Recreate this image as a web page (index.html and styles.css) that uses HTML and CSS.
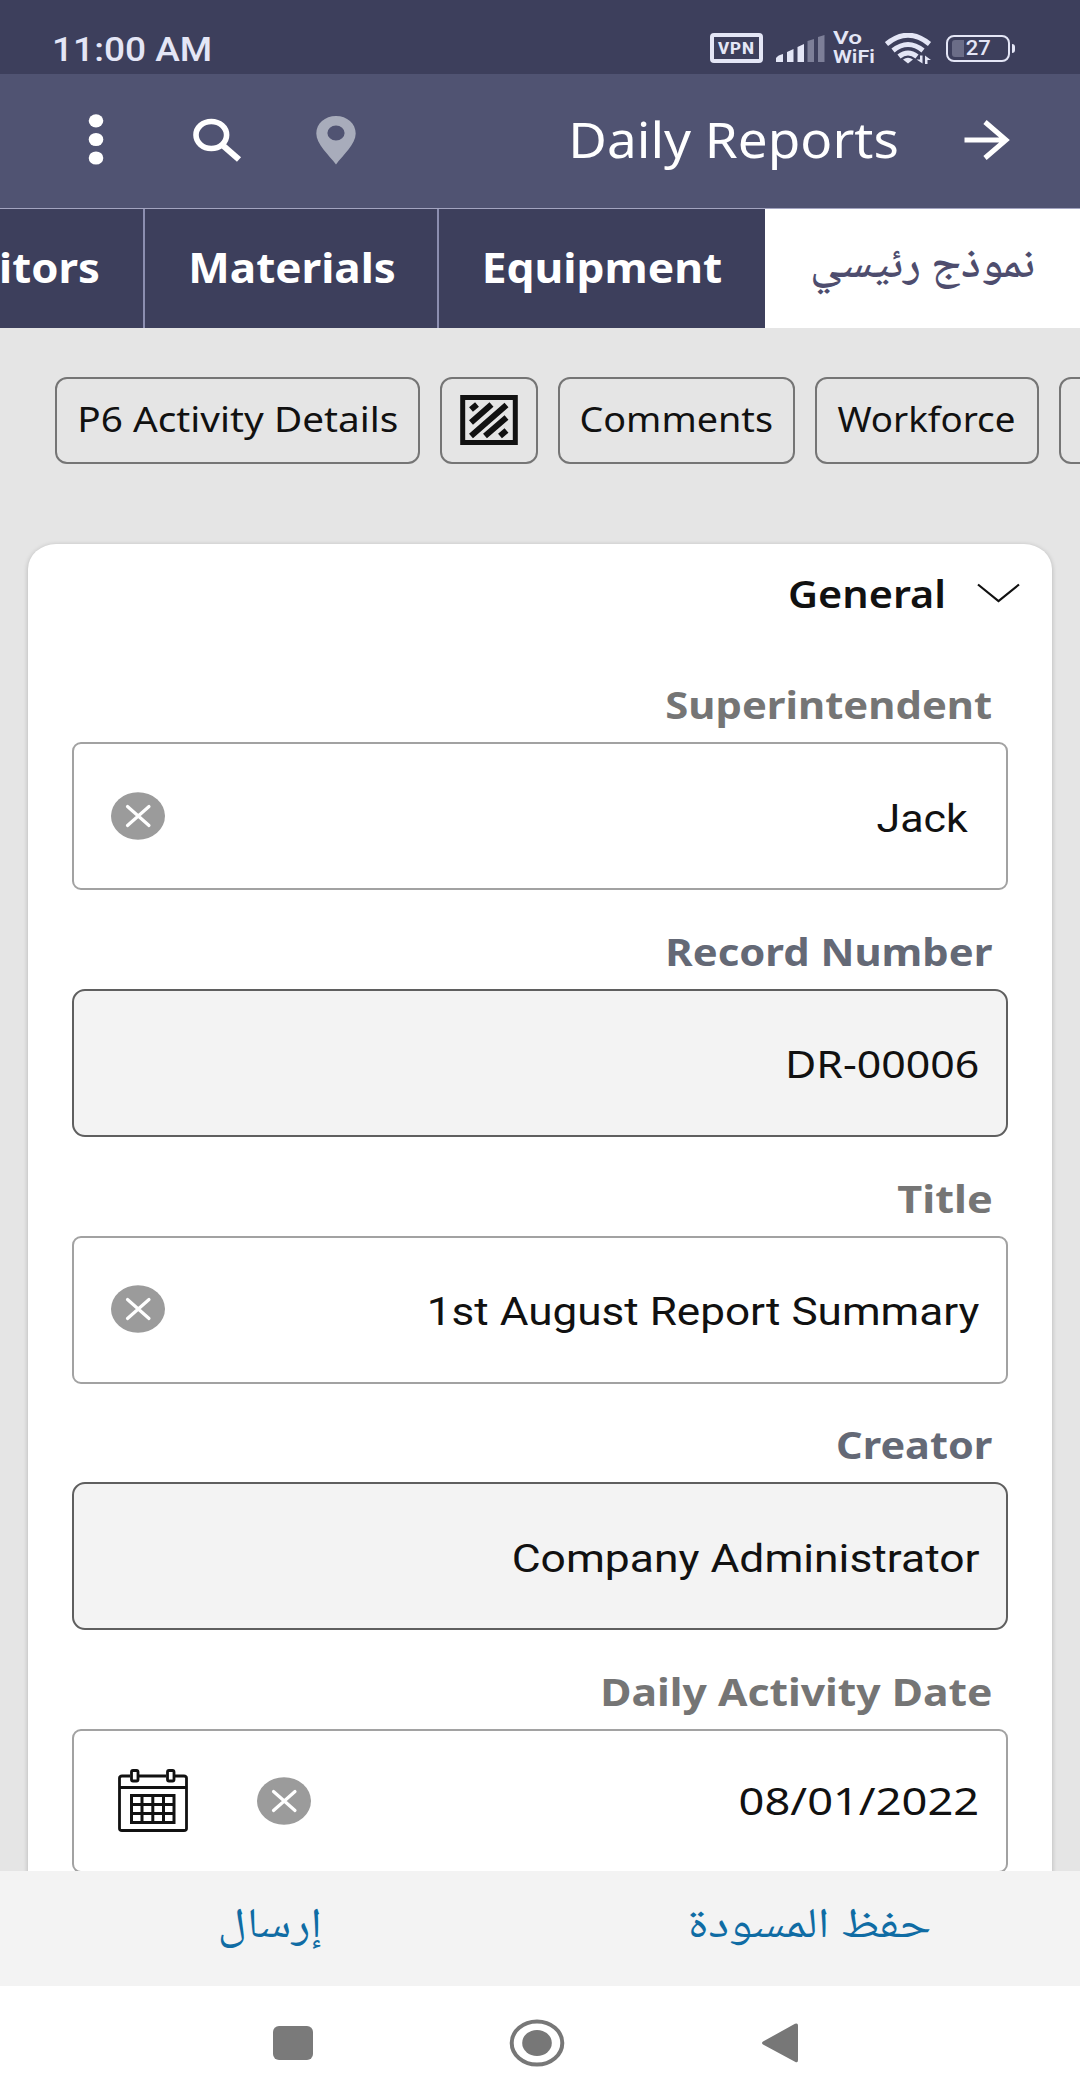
FILE: index.html
```html
<!DOCTYPE html>
<html lang="ar">
<head>
<meta charset="utf-8">
<title>Daily Reports</title>
<link rel="stylesheet" href="styles.css">
</head>
<body>
<div class="status-bar">
  <span class="clock fit">11:00 AM</span>
  <div class="status-icons">
    <span class="vpn">VPN</span>
    <svg class="signal" width="49" height="28" viewBox="0 0 49 28">
      <path d="M0 27V23Q2 20 7 19V27ZM11 27V17L17.5 14V27ZM21.5 27V12L28 9V27Z" fill="#e4e6f6"/>
      <path d="M31.500 27V6L38 4V27ZM42 27V2L48.500 0V27Z" fill="#7d7f98"/>
    </svg>
    <span class="vowifi"><span class="fit vo">Vo</span><span class="fit wifi-text">WiFi</span></span>
    <svg class="wifi" width="47" height="31" viewBox="0 0 47 31">
      <g fill="none" stroke="#e4e6f6" stroke-width="5">
        <path d="M1.500 11Q23 -6.500 44.500 11"/>
        <path d="M8 17.500Q23 5.500 38 17.500"/>
        <path d="M14 23.500Q23 16.500 32 23.500"/>
      </g>
      <path d="M18 26.500Q23 23 28 26.500L23 30.500Z" fill="#e4e6f6"/>
      <path d="M37.500 22.500V30.500L31.500 26.500H35V22.500ZM40 31V22.500L46 27H42.500V31Z" fill="#e4e6f6"/>
    </svg>
    <span class="battery"><span class="battery-level"></span><span class="battery-num fit">27</span></span>
    <span class="battery-tip"></span>
  </div>
</div>

<header class="app-bar">
  <svg class="dots" width="16" height="52" viewBox="0 0 16 52" fill="#fff">
    <ellipse cx="8" cy="6.800" rx="7.300" ry="6.600"/><ellipse cx="8" cy="25.500" rx="7.300" ry="6.600"/><ellipse cx="8" cy="44" rx="7.300" ry="6.600"/>
  </svg>
  <svg class="search" width="50" height="44" viewBox="0 0 50 44" fill="none" stroke="#fff">
    <ellipse cx="18.300" cy="17" rx="15.300" ry="13.500" stroke-width="5.600"/>
    <path d="M30.500 28L46 41.500" stroke-width="6.200"/>
  </svg>
  <svg class="pin" width="40" height="50" viewBox="0 0 40 50">
    <path fill-rule="evenodd" fill="#a8acbb" d="M20 1C9 1 0.300 8.500 0.300 18.500C0.300 29 13 40 20 49.500C27 40 39.700 29 39.700 18.500C39.700 8.500 31 1 20 1ZM20 10.500A8.600 7.500 0 1 1 20 25.500A8.600 7.500 0 1 1 20 10.500Z"/>
  </svg>
  <h1 class="title fit">Daily Reports</h1>
  <svg class="arrow" width="46" height="40" viewBox="0 0 46 40" fill="none" stroke="#fff" stroke-width="5">
    <path d="M0.500 20H42M21 2L42 20L21 38"/>
  </svg>
</header>

<nav class="tabs">
  <div class="tab tab-visitors"><span class="fit">itors</span></div>
  <div class="tab tab-materials"><span class="fit">Materials</span></div>
  <div class="tab tab-equipment"><span class="fit">Equipment</span></div>
  <div class="tab tab-main" dir="rtl"><span class="fit">نموذج رئيسي</span></div>
</nav>

<main class="content">
  <div class="chips">
    <div class="chip chip-p6"><span class="fit">P6 Activity Details</span></div>
    <div class="chip chip-icon">
      <svg width="58" height="50" viewBox="0 0 58 50" fill="none" stroke="#111">
        <path stroke-width="5" d="M2.700 2.500H55.300V47.500H2.700Z"/>
        <path stroke-width="6" d="M11 14.500L17 9.500M11 27.500L31.500 9.500M11 41L46.500 10M25 41L46.500 22.500M40 41L46.500 35.500"/>
      </svg>
    </div>
    <div class="chip chip-comments"><span class="fit">Comments</span></div>
    <div class="chip chip-workforce"><span class="fit">Workforce</span></div>
    <div class="chip chip-next"></div>
  </div>

  <section class="card">
    <div class="card-head">
      <h2 class="fit general">General</h2>
      <svg width="43" height="20" viewBox="0 0 43 20" fill="none" stroke="#111" stroke-width="2.200"><path d="M1 1.500L21.500 18L42 1.500"/></svg>
    </div>

    <div class="label"><span class="fit l-super">Superintendent</span></div>
    <div class="field">
      <svg class="clear" width="54" height="48" viewBox="0 0 54 48"><ellipse cx="27" cy="24" rx="27" ry="23.700" fill="#9b9b9b"/><path d="M16.500 14.500L38 33.500M38 14.500L16.500 33.500" stroke="#fff" stroke-width="3.200" stroke-linecap="round"/></svg>
      <span class="value fit v-jack">Jack</span>
    </div>

    <div class="label readonly"><span class="fit l-record">Record Number</span></div>
    <div class="field locked"><span class="value fit v-record">DR-00006</span></div>

    <div class="label"><span class="fit l-title">Title</span></div>
    <div class="field">
      <svg class="clear" width="54" height="48" viewBox="0 0 54 48"><ellipse cx="27" cy="24" rx="27" ry="23.700" fill="#9b9b9b"/><path d="M16.500 14.500L38 33.500M38 14.500L16.500 33.500" stroke="#fff" stroke-width="3.200" stroke-linecap="round"/></svg>
      <span class="value fit v-title">1st August Report Summary</span>
    </div>

    <div class="label readonly"><span class="fit l-creator">Creator</span></div>
    <div class="field locked"><span class="value fit v-creator">Company Administrator</span></div>

    <div class="label"><span class="fit l-date">Daily Activity Date</span></div>
    <div class="field date">
      <svg class="calendar" width="70" height="64" viewBox="0 0 70 64" fill="none" stroke="#111" stroke-width="2.800">
        <path d="M12 7H4Q1.500 7 1.500 9V59.500Q1.500 61.500 4 61.500H66Q68.500 61.500 68.500 59.500V9Q68.500 7 66 7H57M21 7H48M1.500 18.500H68.500"/>
        <rect x="13.500" y="1.500" width="6.500" height="10.500" rx="1.500"/><rect x="49.500" y="1.500" width="6.500" height="10.500" rx="1.500"/>
        <path stroke-width="3" d="M13.500 26.500H56V53.500H13.500ZM13.500 35.500H56M13.500 44.500H56M24 26.500V53.500M34.800 26.500V53.500M45.500 26.500V53.500"/>
      </svg>
      <svg class="clear" width="54" height="48" viewBox="0 0 54 48"><ellipse cx="27" cy="24" rx="27" ry="23.700" fill="#9b9b9b"/><path d="M16.500 14.500L38 33.500M38 14.500L16.500 33.500" stroke="#fff" stroke-width="3.200" stroke-linecap="round"/></svg>
      <span class="value fit v-date">08/01/2022</span>
    </div>
  </section>
</main>

<div class="actions" dir="rtl">
  <span class="action"><span class="fit a-save">حفظ المسودة</span></span>
  <span class="action"><span class="fit a-send">إرسال</span></span>
</div>

<div class="nav-bar">
  <svg width="40" height="36" viewBox="0 0 40 36"><rect x="0" y="1" width="40" height="34" rx="6" fill="#7a7a7a"/></svg>
  <svg width="56" height="48" viewBox="0 0 56 48"><ellipse cx="28" cy="24" rx="25.300" ry="21.600" fill="none" stroke="#777" stroke-width="4"/><ellipse cx="28" cy="24" rx="14.800" ry="13" fill="#777"/></svg>
  <svg width="38" height="42" viewBox="0 0 38 42"><path d="M2 19.500L34 1.800Q37 0.500 37 3.500V38Q37 41.500 34 39.700L2 22.500Q0 21 2 19.500Z" fill="#777"/></svg>
</div>
</body>
</html>
```
FILE: styles.css
```css
* { box-sizing: border-box; }

body {
  margin: 0;
  width: 1080px;
  height: 2100px;
  overflow: hidden;
  display: flex;
  flex-direction: column;
  background: #e5e5e5;
  font-family: "Noto Sans", "Noto Naskh Arabic", sans-serif;
  color: #111;
}

svg { display: block; flex: none; }

/* Horizontally stretched type */
.fit {
  display: inline-block;
  white-space: nowrap;
  transform: scaleX(var(--sx, 1));
}

/* Status bar */
.status-bar {
  flex: none;
  height: 74px;
  padding: 0 65px 0 52px;
  display: flex;
  justify-content: space-between;
  background: #3d3f5c;
  color: #e4e6f6;
  font-family: Roboto, sans-serif;
}
.clock { --sx: 1.09; transform-origin: left; font-size: 34px; font-weight: 500; line-height: 98px; }
.status-icons { display: flex; align-items: flex-start; }
.vpn {
  width: 53px; height: 30px; margin: 33px 13px 0 0;
  border: 4px solid #e4e6f6; border-radius: 4px;
  font-size: 17px; font-weight: 800; line-height: 23px; text-align: center; letter-spacing: 1px;
}
.signal { margin: 35px 8px 0 0; }
.vowifi { width: 43px; margin: 28px 9px 0 0; display: flex; flex-direction: column; font-size: 19px; font-weight: 600; line-height: 19px; }
.vo { --sx: 1.280; transform-origin: left; align-self: flex-start; }
.wifi-text { --sx: 1.130; transform-origin: left; align-self: flex-start; }
.wifi { margin: 33px 14px 0 0; }
.battery {
  position: relative;
  width: 64px; height: 27px; margin: 35px 2px 0 0;
  border: 2.500px solid #e4e6f6; border-radius: 8px;
  font-size: 20px; font-weight: 500; line-height: 23px; text-align: center;
}
.battery-level { position: absolute; left: 4px; top: 3px; width: 12px; height: 17px; border-radius: 3px 0 0 3px; background: #6b6d87; }
.battery-num { --sx: 1.100; }
.battery-tip { width: 3px; height: 9px; margin-top: 44px; border-radius: 0 3px 3px 0; background: #e4e6f6; }

/* App bar */
.app-bar {
  flex: none;
  height: 134px;
  padding: 0 70px 2px 88px;
  display: flex;
  align-items: center;
  background: #505372;
  color: #fff;
}
.search { margin-left: 89px; }
.pin { margin-left: 73px; }
.title { --sx: 1.060; transform-origin: right; margin: 0 65px 3px auto; font-size: 50px; font-weight: 400; line-height: 126px; }

/* Tabs */
.tabs { flex: none; height: 120px; display: flex; overflow: hidden; border-top: 1.500px solid #a3a4c0; color: #fff; font-size: 42px; font-weight: 700; }
.tab { flex: none; display: flex; align-items: center; justify-content: center; background: #3d3f5c; border-right: 2px solid #8c8eb0; padding-bottom: 5px; }
.tab-visitors { width: 145px; --sx: 1.040; justify-content: flex-end; padding-right: 43px; }
.tab-visitors .fit { transform-origin: right; }
.tab-materials { width: 294px; padding-left: 2px; --sx: 1.047; }
.tab-equipment { width: 326px; --sx: 1.055; border-right: 0; }
.tab-main { width: 315px; --sx: 1.130; border-right: 0; background: #fff; color: #4e4d6e; font-family: "Noto Naskh Arabic", serif; font-size: 41px; font-weight: 600; line-height: 60px; padding-bottom: 1px; }

/* Body */
.content { flex: none; height: 1543px; overflow: hidden; }
.chips { display: flex; gap: 20px; padding: 49px 0 0 55px; font-size: 34px; }
.chip { flex: none; height: 87px; padding-bottom: 3px; display: flex; align-items: center; justify-content: center; border: 2.500px solid #757575; border-radius: 12px; }
.chip-p6 { width: 365px; --sx: 1.140; }
.chip-icon { width: 98px; padding-bottom: 2px; }
.chip-comments { width: 237px; --sx: 1.110; }
.chip-workforce { width: 224px; padding-right: 2px; --sx: 1.080; }
.chip-next { width: 200px; }

.card {
  width: 1024px;
  height: 1500px;
  margin: 80px 0 0 28px;
  padding: 0 44.500px 0 44px;
  background: #fff;
  border-radius: 28px 28px 0 0 / 25px 25px 0 0;
  box-shadow: 0 1px 5px rgba(0, 0, 0, .22);
}
.card-head { height: 122px; margin-right: -12px; padding-bottom: 24px; display: flex; align-items: center; justify-content: flex-end; gap: 30px; }
.general { --sx: 1.090; transform-origin: right; margin: 0; font-size: 38px; font-weight: 600; }

.label { height: 76px; padding-right: 15px; display: flex; justify-content: flex-end; color: #757575; font-size: 38px; font-weight: 700; line-height: 77px; }
.label.readonly { color: #646976; }
.label .fit { transform-origin: right; }
.l-super { --sx: 1.100; }
.l-record { --sx: 1.100; }
.l-title { --sx: 1.140; }
.l-creator { --sx: 1.090; }
.l-date { --sx: 1.122; }

.field { height: 148px; margin-bottom: 22.750px; padding: 0 26px 0 37px; display: flex; align-items: center; border: 2.500px solid #a2a2a2; border-radius: 9px; }
.field.locked { background: #f3f3f3; border-color: #5f5f5f; border-radius: 13px; }
.field.date { height: 144px; padding-left: 44px; }
.clear { margin-top: -1px; }
.calendar { margin-right: 69px; }
.value { margin-left: auto; transform-origin: right; font-size: 38px; }
.v-jack { --sx: 1.130; margin-right: 12px; padding-top: 5px; font-family: Roboto, sans-serif; }
.v-record { --sx: 1.128; }
.v-title { --sx: 1.160; padding-top: 5px; font-family: Roboto, sans-serif; }
.v-creator { --sx: 1.168; padding-top: 5px; font-family: Roboto, sans-serif; }
.v-date { --sx: 1.190; padding-bottom: 3px; }

/* Bottom actions */
.actions { flex: none; height: 115px; display: flex; background: #f3f3f3; color: #0f6ca4; font-family: "Noto Naskh Arabic", serif; font-size: 42px; line-height: 114px; }
.action { flex: 1; text-align: center; }
.a-save { --sx: 1.200; }
.a-send { --sx: 1.170; }

/* System navigation */
.nav-bar { flex: 1; padding: 0 281px 0 273px; display: flex; align-items: center; justify-content: space-between; background: #fff; }
```
